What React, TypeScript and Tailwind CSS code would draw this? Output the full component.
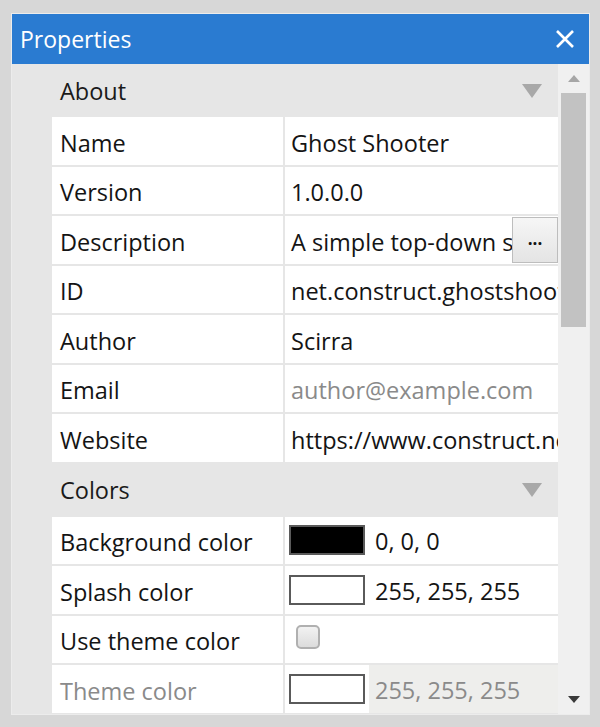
import React from 'react';

const font = { fontFamily: '"Open Sans", "Noto Sans", sans-serif' };

type Row = { label: string; value?: React.ReactNode; muted?: boolean };

function SectionHeader({ title }: { title: string }) {
  return (
    <div className="h-[53px] flex items-center justify-between pl-[8px] pr-[16px] shrink-0">
      <span className="text-[23.5px] text-[#1a1a1a] pt-[2px]">{title}</span>
      <svg width="20" height="14" viewBox="0 0 20 14">
        <polygon points="0,0 20,0 10,14" fill="#a8a8a8" />
      </svg>
    </div>
  );
}

function PropRow({ label, value, muted }: Row) {
  return (
    <div className="h-[49.5px] flex border-b-2 border-[#e6e6e6] bg-white shrink-0">
      <div className={`w-[233px] shrink-0 border-r-2 border-[#e6e6e6] pl-[8px] pt-[5px] flex items-center text-[23.5px] whitespace-nowrap ${muted ? 'text-[#8a8a8a]' : 'text-[#141414]'}`}>
        {label}
      </div>
      <div className="flex-1 min-w-0 flex items-center text-[23.5px] text-[#141414] overflow-hidden whitespace-nowrap">
        {value}
      </div>
    </div>
  );
}

function Swatch({ color }: { color: string }) {
  return <div className={`w-[76px] h-[30px] border-2 border-[#5a5a5a] shrink-0 ${color}`} />;
}

export default function App() {
  return (
    <div className="w-[600px] h-[727px] bg-[#d7d7d7] pt-[13px] pl-[11px]" style={font}>
      <div className="w-[579px] h-[702px] border border-[#ececec] flex flex-col overflow-hidden">
        <div className="h-[50px] bg-[#2a7bd1] flex items-center justify-between pl-[8px] pr-[14px] shrink-0">
          <span className="text-[23px] text-white">Properties</span>
          <svg width="20" height="20" viewBox="0 0 20 20">
            <path d="M2 2 L18 18 M18 2 L2 18" stroke="white" strokeWidth="2.6" />
          </svg>
        </div>
        <div className="flex-1 flex bg-[#e6e6e6] min-h-0">
          <div className="flex-1 pl-[40px] flex flex-col overflow-hidden">
            <SectionHeader title="About" />
            <PropRow label="Name" value={<span className="pl-[6px] pt-[5px]">Ghost Shooter</span>} />
            <PropRow label="Version" value={<span className="pl-[6px] pt-[5px]">1.0.0.0</span>} />
            <PropRow
              label="Description"
              value={
                <div className="flex items-center w-full h-full">
                  <span className="pl-[6px] pt-[5px] flex-1 overflow-hidden">A simple top-down shooter</span>
                  <div className="w-[46px] h-[46px] shrink-0 border border-[#bdbdbd] bg-gradient-to-b from-[#f6f6f6] to-[#e4e4e4] flex items-center justify-center text-[17px] font-bold leading-none pb-[2px]">
                    ...
                  </div>
                </div>
              }
            />
            <PropRow label="ID" value={<span className="pl-[6px] pt-[5px]">net.construct.ghostshooter</span>} />
            <PropRow label="Author" value={<span className="pl-[6px] pt-[5px]">Scirra</span>} />
            <PropRow label="Email" value={<span className="pl-[6px] pt-[5px] text-[#8a8a8a]">author@example.com</span>} />
            <PropRow label="Website" value={<span className="pl-[6px] pt-[5px]">https://www.construct.net</span>} />
            <SectionHeader title="Colors" />
            <PropRow
              label="Background color"
              value={
                <div className="flex items-center gap-[10px] pl-[4px]">
                  <Swatch color="bg-black" />
                  <span className="pt-[3px]">0, 0, 0</span>
                </div>
              }
            />
            <PropRow
              label="Splash color"
              value={
                <div className="flex items-center gap-[10px] pl-[4px]">
                  <Swatch color="bg-white" />
                  <span className="pt-[3px]">255, 255, 255</span>
                </div>
              }
            />
            <PropRow
              label="Use theme color"
              value={
                <div className="pl-[11px] pb-[4px]">
                  <div className="w-[24px] h-[24px] rounded-[5px] border-2 border-[#b0b0b0] bg-gradient-to-b from-[#f2f2f2] to-[#dcdcdc]" />
                </div>
              }
            />
            <PropRow
              label="Theme color"
              muted
              value={
                <div className="flex items-center h-full w-full pl-[4px]">
                  <Swatch color="bg-white" />
                  <span className="flex-1 h-full ml-[4px] pl-[6px] pt-[3px] bg-[#eeeeec] text-[#8a8a8a] flex items-center">255, 255, 255</span>
                </div>
              }
            />
          </div>
          <div className="w-[31px] shrink-0 bg-[#f0f0f0] flex flex-col items-center">
            <div className="h-[29px] flex items-center justify-center">
              <svg width="12" height="7" viewBox="0 0 12 7">
                <polygon points="0,7 12,7 6,0" fill="#a6a6a6" />
              </svg>
            </div>
            <div className="w-[25px] h-[234px] bg-[#c2c2c2]" />
            <div className="flex-1" />
            <div className="h-[30px] flex items-center justify-center">
              <svg width="12" height="7" viewBox="0 0 12 7">
                <polygon points="0,0 12,0 6,7" fill="#3a3a3a" />
              </svg>
            </div>
          </div>
        </div>
      </div>
    </div>
  );
}
